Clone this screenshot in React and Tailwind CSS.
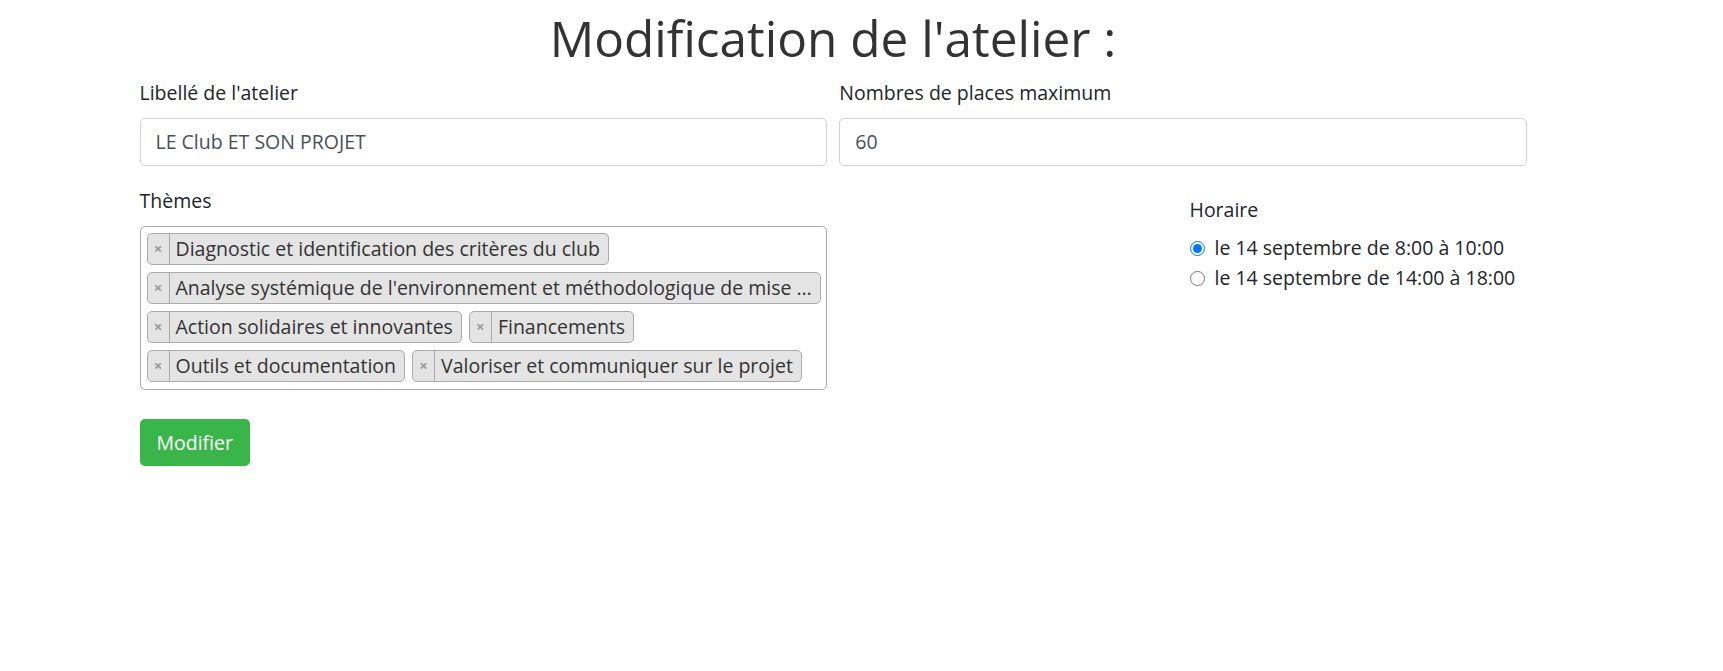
import React from 'react';

const themes = [
  'Diagnostic et identification des critères du club',
  "Analyse systémique de l'environnement et méthodologique de mise …",
  'Action solidaires et innovantes',
  'Financements',
  'Outils et documentation',
  'Valoriser et communiquer sur le projet',
];

const horaires = [
  { id: 'h1', label: 'le 14 septembre de 8:00 à 10:00', checked: true },
  { id: 'h2', label: 'le 14 septembre de 14:00 à 18:00', checked: false },
];

function Chip({ label }) {
  return (
    <li className="flex h-[32px] max-w-full min-w-0 items-stretch rounded-[5px] border border-[#aaa] bg-[#e4e4e4]">
      <span className="flex w-[22px] flex-none items-center justify-center border-r border-[#aaa] text-[15px] font-bold text-[#999]">
        ×
      </span>
      <span className="truncate pl-[6px] pr-[8px] leading-[30px] text-[#333]">{label}</span>
    </li>
  );
}

export default function App() {
  return (
    <div className="min-h-[671px] bg-white text-[19.5px] text-[#212529]" style={{ fontFamily: '"Open Sans", sans-serif' }}>
      <div className="ml-[139.5px] w-[1387px]">
        {/* Titre */}
        <h1 className="pt-[8px] mb-[10px] text-center text-[49.5px] leading-[60px] text-[#333]">
          Modification de l'atelier :
        </h1>

        {/* Libellé + places */}
        <div className="grid grid-cols-2 gap-x-[12.5px]">
          <div>
            <label className="mb-[10px] block leading-[30px]">Libellé de l'atelier</label>
            <input
              type="text"
              defaultValue="LE Club ET SON PROJET"
              className="block h-[47.5px] w-full rounded-[5px] border border-[#ced4da] px-[15px] text-[#495057] outline-none"
            />
          </div>
          <div>
            <label className="mb-[10px] block leading-[30px]">Nombres de places maximum</label>
            <input
              type="text"
              defaultValue="60"
              className="block h-[47.5px] w-full rounded-[5px] border border-[#ced4da] px-[15px] text-[#495057] outline-none"
            />
          </div>
        </div>

        {/* Thèmes + horaire */}
        <div className="mt-[20px] flex">
          <div className="w-[687px] flex-none">
            <label className="mb-[10px] block leading-[30px]">Thèmes</label>
            <ul className="flex flex-wrap gap-x-[7px] gap-y-[7px] rounded-[5px] border border-[#aaa] pl-[6px] pt-[6px] pb-[7px]">
              {themes.map((t) => (
                <Chip key={t} label={t} />
              ))}
            </ul>
          </div>
          <div className="ml-[363px] pt-[9.5px]">
            <label className="mb-[8px] block leading-[30px]">Horaire</label>
            {horaires.map((h) => (
              <div key={h.id} className="flex h-[30px] items-center gap-[10px]">
                <input
                  type="radio"
                  name="horaire"
                  id={h.id}
                  defaultChecked={h.checked}
                  className="m-0 h-[15px] w-[15px] accent-[#0075ff]"
                />
                <label htmlFor={h.id} className="leading-[30px]">{h.label}</label>
              </div>
            ))}
          </div>
        </div>

        {/* Bouton */}
        <button className="mt-[29px] h-[47.5px] rounded-[5px] bg-[#39b54a] px-[17px] text-white">
          Modifier
        </button>
      </div>
    </div>
  );
}
